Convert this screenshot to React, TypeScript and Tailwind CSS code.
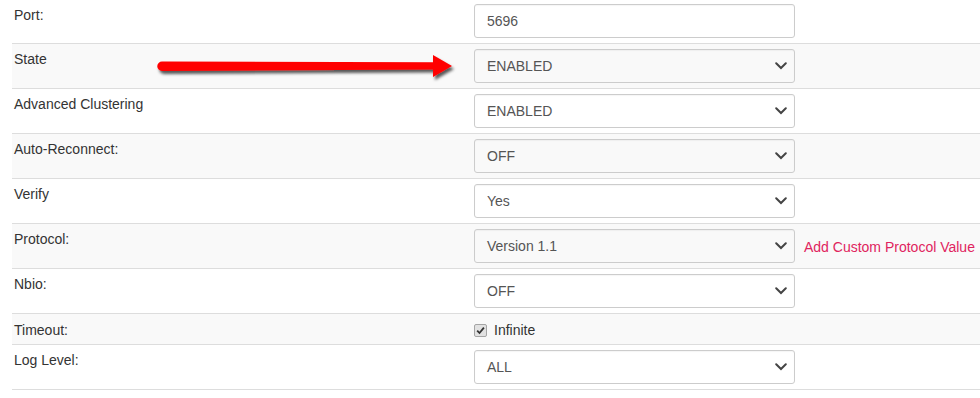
import { ReactNode } from "react";

type Row = {
  label: string;
  value?: string;
  kind: "input" | "select" | "checkbox";
  grey?: boolean;
  extra?: ReactNode;
};

const rows: Row[] = [
  { label: "Port:", value: "5696", kind: "input" },
  { label: "State", value: "ENABLED", kind: "select", grey: true },
  { label: "Advanced Clustering", value: "ENABLED", kind: "select" },
  { label: "Auto-Reconnect:", value: "OFF", kind: "select", grey: true },
  { label: "Verify", value: "Yes", kind: "select" },
  {
    label: "Protocol:",
    value: "Version 1.1",
    kind: "select",
    grey: true,
    extra: (
      <a className="ml-[9px] mt-[8px] text-[14px] text-[#e0245e] whitespace-nowrap cursor-pointer">
        Add Custom Protocol Value
      </a>
    ),
  },
  { label: "Nbio:", value: "OFF", kind: "select" },
  { label: "Timeout:", kind: "checkbox", grey: true },
  { label: "Log Level:", value: "ALL", kind: "select" },
];

const Chevron = () => (
  <svg width="12" height="8" viewBox="0 0 12 8" className="absolute right-[7px] top-1/2 -translate-y-1/2">
    <path d="M1.2 1.3 L6 6 L10.8 1.3" fill="none" stroke="#444" strokeWidth="2" strokeLinecap="round" />
  </svg>
);

const Control = ({ row }: { row: Row }) => {
  if (row.kind === "checkbox") {
    return (
      <div className="flex items-center gap-[7px] pt-[6px] pb-[4px] h-[30px]">
        <span className="w-[13px] h-[13px] rounded-[2px] border border-[#a5a5a5] bg-[#e2e2e2] flex items-center justify-center">
          <svg width="9" height="9" viewBox="0 0 9 9">
            <path d="M1.2 4.6 L3.5 7 L7.9 1.6" fill="none" stroke="#333" strokeWidth="1.8" />
          </svg>
        </span>
        <span className="text-[14px] text-[#333] leading-5">Infinite</span>
      </div>
    );
  }
  return (
    <div className="flex items-start">
      <div className="relative w-[321px] h-[34px] border border-[#ccc] rounded-[3px] flex items-center pl-[12px] text-[14px] text-[#555] bg-transparent shadow-[inset_0_1px_1px_rgba(0,0,0,0.04)]">
        {row.value}
        {row.kind === "select" && <Chevron />}
      </div>
      {row.extra}
    </div>
  );
};

export default function App() {
  return (
    <div className="relative w-[980px] h-[398px] bg-white overflow-hidden font-['Liberation_Sans',Arial,sans-serif] text-[14px] text-[#333]">
      <div className="ml-3">
        {rows.map((row, i) => (
          <div
            key={row.label}
            className={`grid grid-cols-[462px_1fr] border-b border-[#dddddd] ${
              row.grey ? "bg-[#f9f9f9]" : "bg-white"
            } ${row.kind === "checkbox" ? "h-[31px]" : i === 0 ? "h-[44px] pt-[4px]" : "h-[45px] pt-[5px]"}`}
          >
            <div className={`pl-[2px] leading-5 ${row.kind === "checkbox" ? "pt-[6px]" : i === 0 ? "pt-[1px]" : "pt-[0px]"}`}>
              {row.label}
            </div>
            <Control row={row} />
          </div>
        ))}
      </div>

      {/* annotation arrow */}
      <svg className="absolute left-0 top-0 pointer-events-none" width="980" height="398">
        <defs>
          <filter id="sh" x="-5%" y="-50%" width="110%" height="200%">
            <feDropShadow dx="2" dy="3" stdDeviation="1.4" floodColor="#000" floodOpacity="0.65" />
          </filter>
        </defs>
        <path
          d="M162 61.5 L433 62.3 L433 55 L452 66 L433 77 L433 69.5 L162 71 A4.75 4.75 0 0 1 162 61.5 Z"
          fill="#ff0000"
          filter="url(#sh)"
        />
      </svg>
    </div>
  );
}
